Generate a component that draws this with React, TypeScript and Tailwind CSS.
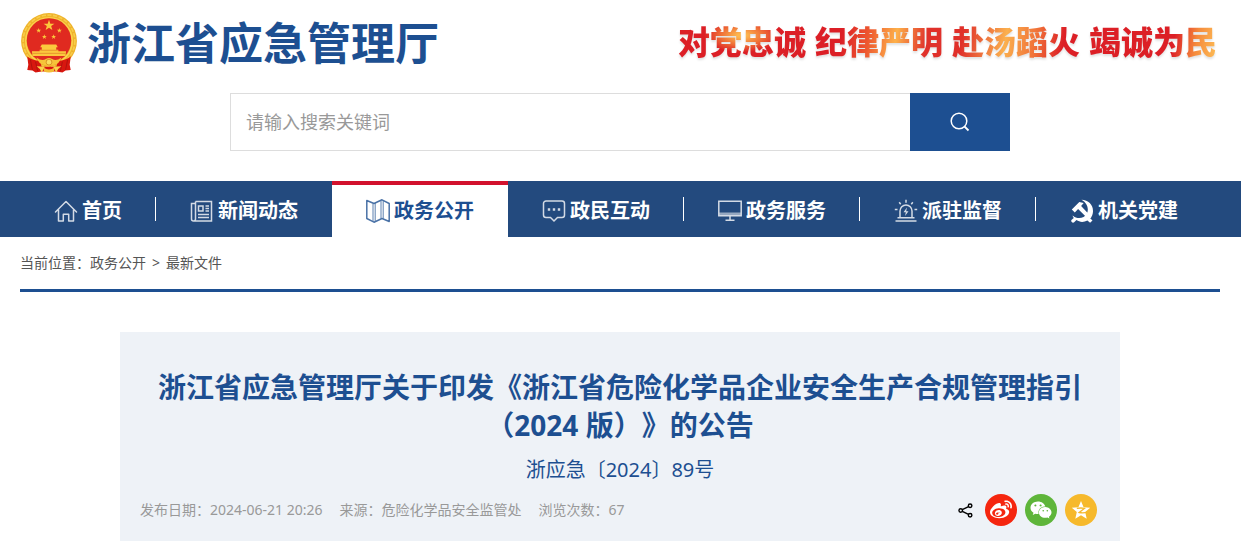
import React from "react";
import { FaWeibo, FaWeixin } from "react-icons/fa";

type IconProps = { className?: string };

const line = {
  viewBox: "0 0 24 24",
  fill: "none",
  stroke: "currentColor",
  strokeWidth: 1.5,
  "aria-hidden": true,
} as const;

const STAR = "M0-10 2.35-3.1 9.5-3.1 3.8 1.2 5.9 8.1 0 4 -5.9 8.1 -3.8 1.2 -9.5-3.1 -2.35-3.1Z";

function Emblem({ className }: IconProps) {
  return (
    <svg viewBox="0 0 54 58" className={className} role="img" aria-label="国徽">
      <circle cx="27" cy="27" r="27" fill="#efb32b" />
      <circle cx="27" cy="27" r="25" fill="none" stroke="#f8cd4c" strokeWidth="1.500" strokeDasharray="4 1.500" />
      <circle cx="27" cy="27" r="22.500" fill="none" stroke="#fbd24c" strokeWidth="1.500" />
      <circle cx="27" cy="26.500" r="21.500" fill="#e02a20" />
      <g fill="#fbc93d">
        <path d={STAR} transform="translate(27 12) scale(.55)" />
        <path d={STAR} transform="translate(17 17) scale(.25)" />
        <path d={STAR} transform="translate(37 17) scale(.25)" />
        <path d={STAR} transform="translate(22.500 23) scale(.25)" />
        <path d={STAR} transform="translate(31.500 23) scale(.25)" />
        <path d="M20 30.500h14l1.500 2.500h-17ZM20 33h14v2.500h-14ZM18 35.500h18v3.500h-18ZM10.500 37h33l-.5 4.500h-32Z" />
      </g>
      <path d="M18.500 36h17M11 39h32" stroke="#e0802a" strokeWidth=".7" />
      <path d="M6 42Q11 46 18 46L20 52 34 52 36 46Q43 46 48 42L47 50 48 55 43 55.500 40 57.500 34 56.500 20 56.500 14 57.500 11 55.500 6 55 7 50Z" fill="#d8170f" />
      <path d="M9 45 11 55M45 45 43 55M14 47 16 56M40 47 38 56" stroke="#a8110d" strokeWidth=".8" fill="none" />
      <path d="M15 43Q20 47 24 44.500Q27 42.500 30 44.500Q34 47 39 43Q37 50 31 49.500Q27 53 23 49.500Q17 50 15 43Z" fill="#f6c43a" />
      <circle cx="27" cy="47.500" r="2.800" fill="#fbdb5e" stroke="#d5871c" strokeWidth=".8" />
      <path d="M15 51.500 23 52 20 57.500Q19 54 15 51.500ZM39 51.500 31 52 34 57.500Q35 54 39 51.500Z" fill="#fbd24c" />
      <path d="M22 53Q27 56 32 53V56.500Q27 58.500 22 56.500Z" fill="#f3bd35" />
    </svg>
  );
}

function HomeIcon({ className }: IconProps) {
  return (
    <svg {...line} className={className}>
      <path d="M1.500 13 12 2.500 22.500 13M4.500 11v11h4.800v-6.800h5.400V22h4.800V11" strokeLinejoin="round" strokeLinecap="round" />
    </svg>
  );
}

function NewsIcon({ className }: IconProps) {
  return (
    <svg {...line} className={className}>
      <path d="M5.500 2.500h16v19.500H3.500a2 2 0 0 1-2-2V4.500h4M5.500 2.500v17.500a2 2 0 0 1-2 2" />
      <path d="M8.500 7h4.500v5H8.500ZM15.500 7h3.500M15.500 9.500h3.500M15.500 12h3.500M8 15.500h11M8 18.500h11" />
    </svg>
  );
}

function MapIcon({ className }: IconProps) {
  return (
    <svg {...line} className={className}>
      <path d="M.8 1.500 8 4.500 16 .8 23.200 4.500V22.500L16 19.500 8 23.200.8 19.500Z" strokeLinejoin="round" />
      <path d="M7 4.500v18M9.200 4v18.500M15 1.500v18M17.200 1.800v18" strokeWidth=".9" />
    </svg>
  );
}

function ChatIcon({ className }: IconProps) {
  return (
    <svg {...line} className={className}>
      <path d="M4 2h16a2.500 2.500 0 0 1 2.500 2.500v11.500a2.500 2.500 0 0 1-2.500 2.500h-4.500L12 22l-3.500-3.500H4A2.500 2.500 0 0 1 1.500 16V4.500A2.500 2.500 0 0 1 4 2Z" />
      <path d="M5.800 10.500h2.400M10.800 10.500h2.400M15.800 10.500h2.400" strokeWidth="2.400" />
    </svg>
  );
}

function ScreenIcon({ className }: IconProps) {
  return (
    <svg {...line} className={className}>
      <path d="M.8 2.200h22.400v14.600H.8ZM12 17v4M7.500 21.200h9" />
      <path d="M1 14.800h22" strokeWidth="2.600" opacity=".65" />
    </svg>
  );
}

function AlarmIcon({ className }: IconProps) {
  return (
    <svg {...line} className={className}>
      <path d="M6 18.500V12a6 6 0 0 1 12 0v6.500M3.500 18.700h17M1.500 22h21" />
      <path d="M12 .8v3M5.200 3.200l1.500 2M18.800 3.200l-1.500 2M.8 10.500h2.700M20.500 10.500h2.700" />
      <path d="M12.900 8.500 9.500 13.200h2.300L11.100 17 14.500 12.200h-2.300Z" fill="currentColor" stroke="none" />
    </svg>
  );
}

function PartyIcon({ className }: IconProps) {
  return (
    <svg viewBox="0 0 24 24" fill="currentColor" aria-hidden="true" className={className}>
      <path d="M11.500.8C18.500 1 23.300 6 23 12.500c-.1 3-1.200 5.300-2.800 6.800l2.300 2.200-2.400 2.300-2.700-2.300c-3.800 2.100-7.800 1.800-10.900-.4l-2.600 2.500c-1.800.6-3.200-.9-2.500-2.700L3.800 19c-.8-.8-1.100-1.600-1.200-2.500 3.500 2.900 7.500 3.200 11 1.500 6-3.200 5.900-13-2.100-17.200Z" />
      <path d="M1.800 10.500 9.300 3l4.400 1-2.600 3L21.500 18l-2.800 2.600L8.100 9.900 4.800 13.400Z" />
    </svg>
  );
}

function SearchIcon({ className }: IconProps) {
  return (
    <svg {...line} viewBox="0 0 20 20" className={className}>
      <circle cx="9" cy="9" r="7.800" />
      <path d="m14.500 14.500 4 4" strokeWidth="1.800" />
    </svg>
  );
}

function ShareIcon({ className }: IconProps) {
  return (
    <svg {...line} viewBox="0 0 16 16" className={className}>
      <circle cx="2.900" cy="8" r="1.900" />
      <circle cx="12.900" cy="2.900" r="1.900" />
      <circle cx="12.900" cy="13.100" r="1.900" />
      <path d="M4.600 7.100 11.200 3.800M4.600 8.900l6.600 3.300" />
    </svg>
  );
}

function QzoneIcon({ className }: IconProps) {
  return (
    <svg viewBox="0 0 20 20" aria-hidden="true" className={className}>
      <path d="M10 1 12.600 7.200 19.200 7.700 14.200 12.100 15.700 18.700 10 15.200 4.300 18.700 5.800 12.100.8 7.700 7.400 7.200Z" fill="#fff" />
      <path d="M5.800 8.400Q10 7.600 13.500 8.400L8.200 12.500Q12 13.300 17 12.200" fill="none" stroke="#f6b92c" strokeWidth="1.300" />
    </svg>
  );
}

type NavItem = {
  label: string;
  Icon: (p: IconProps) => React.JSX.Element;
  active?: boolean;
  divider?: boolean;
};

const navItems: NavItem[] = [
  { label: "首页", Icon: HomeIcon, divider: true },
  { label: "新闻动态", Icon: NewsIcon },
  { label: "政务公开", Icon: MapIcon, active: true },
  { label: "政民互动", Icon: ChatIcon, divider: true },
  { label: "政务服务", Icon: ScreenIcon, divider: true },
  { label: "派驻监督", Icon: AlarmIcon, divider: true },
  { label: "机关党建", Icon: PartyIcon },
];

const slogans = [
  { text: "对党忠诚", tone: "bg-[radial-gradient(ellipse_at_50%_35%,#fdb64e_5%,#ee6a35_25%,#dc1f26_42%)]" },
  { text: "纪律严明", tone: "bg-[linear-gradient(100deg,#dc1f26_22%,#ee5a30_42%,#fdb04a_62%,#e0302a_85%)]" },
  { text: "赴汤蹈火", tone: "bg-[linear-gradient(100deg,#e0302a_10%,#fbb04e_42%,#f07038_65%,#dc1f26_85%)]" },
  { text: "竭诚为民", tone: "bg-[linear-gradient(100deg,#dc1f26_65%,#f58a3c_82%,#fdbb55_98%)]" },
];

const shares = [
  { label: "分享到微博", color: "bg-[#f5260f]", icon: <FaWeibo className="size-[22px]" /> },
  { label: "分享到微信", color: "bg-[#5eb53a]", icon: <FaWeixin className="size-[22px]" /> },
  { label: "分享到QQ空间", color: "bg-[#f6b92c]", icon: <QzoneIcon className="size-5" /> },
];

export default function App() {
  return (
    <div className="bg-white font-['Noto_Sans','Noto_Sans_CJK_SC',sans-serif] text-[#555] [text-spacing-trim:space-all]">
      <header>
        <div className="mx-5 flex h-[93px] max-w-[1200px] items-start justify-between pt-3 xl:mx-auto">
          <h1 className="flex items-center gap-2.5 pl-px text-[44px] leading-[62px] font-bold whitespace-nowrap text-[#1d4f91]">
            <Emblem className="h-[60px] w-14" />
            浙江省应急管理厅
          </h1>
          <p className="mt-2 flex gap-[9px] pr-[3px] text-[32px] leading-[44px] font-black whitespace-nowrap drop-shadow-[0_2px_1px_rgba(0,0,0,0.12)]">
            {slogans.map((s) => (
              <span key={s.text} className={`bg-clip-text text-transparent ${s.tone}`}>
                {s.text}
              </span>
            ))}
          </p>
        </div>
        <div className="mx-5 max-w-[1200px] xl:mx-auto">
          <form className="mx-auto flex h-[58px] max-w-[780px]" onSubmit={(e) => e.preventDefault()}>
            <input
              type="text"
              aria-label="搜索关键词"
              placeholder="请输入搜索关键词"
              className="min-w-0 flex-1 border border-r-0 border-[#ddd] px-[15px] text-lg outline-none placeholder:text-[#999]"
            />
            <button type="submit" aria-label="搜索" className="flex w-[100px] items-center justify-center bg-[#1d4f91] text-white">
              <SearchIcon className="size-5" />
            </button>
          </form>
        </div>
        <nav className="mt-[30px] bg-[#234a7e]">
          <ul className="mx-5 flex max-w-[1200px] xl:mx-auto">
            {navItems.map(({ label, Icon, active, divider }) => (
              <li key={label} className="flex items-center">
                <a
                  href="#"
                  className={`flex h-14 items-center gap-1 border-t-4 text-xl font-bold whitespace-nowrap ${
                    active ? "border-t-[#d2112d] bg-white text-[#1d4f91]" : "border-transparent text-white"
                  } ${divider ? "pr-[33px] pl-[34px]" : "px-[34px]"}`}
                >
                  <Icon className={`size-6 ${label === "机关党建" ? "" : "opacity-80"}`} />
                  {label}
                </a>
                {divider && <span className="h-6 w-px bg-white" />}
              </li>
            ))}
          </ul>
        </nav>
      </header>
      <main className="mx-5 max-w-[1200px] xl:mx-auto">
        <div className="flex gap-[6px] border-b-3 border-[#1d4f91] pt-4 pb-4 text-sm leading-5">
          <span>
            当前位置：<a href="#">政务公开</a>
          </span>
          <span>&gt;</span>
          <a href="#">最新文件</a>
        </div>
        <article className="mx-auto mt-10 max-w-[1000px] bg-[#eef2f7] px-5 pt-9 pb-[15px] text-[#1d4f91]">
          <h2 className="text-center text-[28px] leading-[38px] font-bold">
            浙江省应急管理厅关于印发《浙江省危险化学品企业安全生产合规管理指引（2024 版）》的公告
          </h2>
          <p className="mt-2 text-center text-xl leading-9">浙应急〔2024〕89号</p>
          <div className="mt-1.5 flex items-center justify-between">
            <p className="flex gap-[17px] text-sm text-[#999]">
              <span>发布日期：2024-06-21 20:26</span>
              <span>来源：危险化学品安全监管处</span>
              <span>浏览次数：67</span>
            </p>
            <div className="flex items-center gap-2 pr-[3px]">
              <button type="button" aria-label="分享" className="mr-1 text-black">
                <ShareIcon className="size-[15px]" />
              </button>
              {shares.map((s) => (
                <a key={s.label} href="#" aria-label={s.label} className={`flex size-8 items-center justify-center rounded-full text-white ${s.color}`}>
                  {s.icon}
                </a>
              ))}
            </div>
          </div>
        </article>
      </main>
    </div>
  );
}
